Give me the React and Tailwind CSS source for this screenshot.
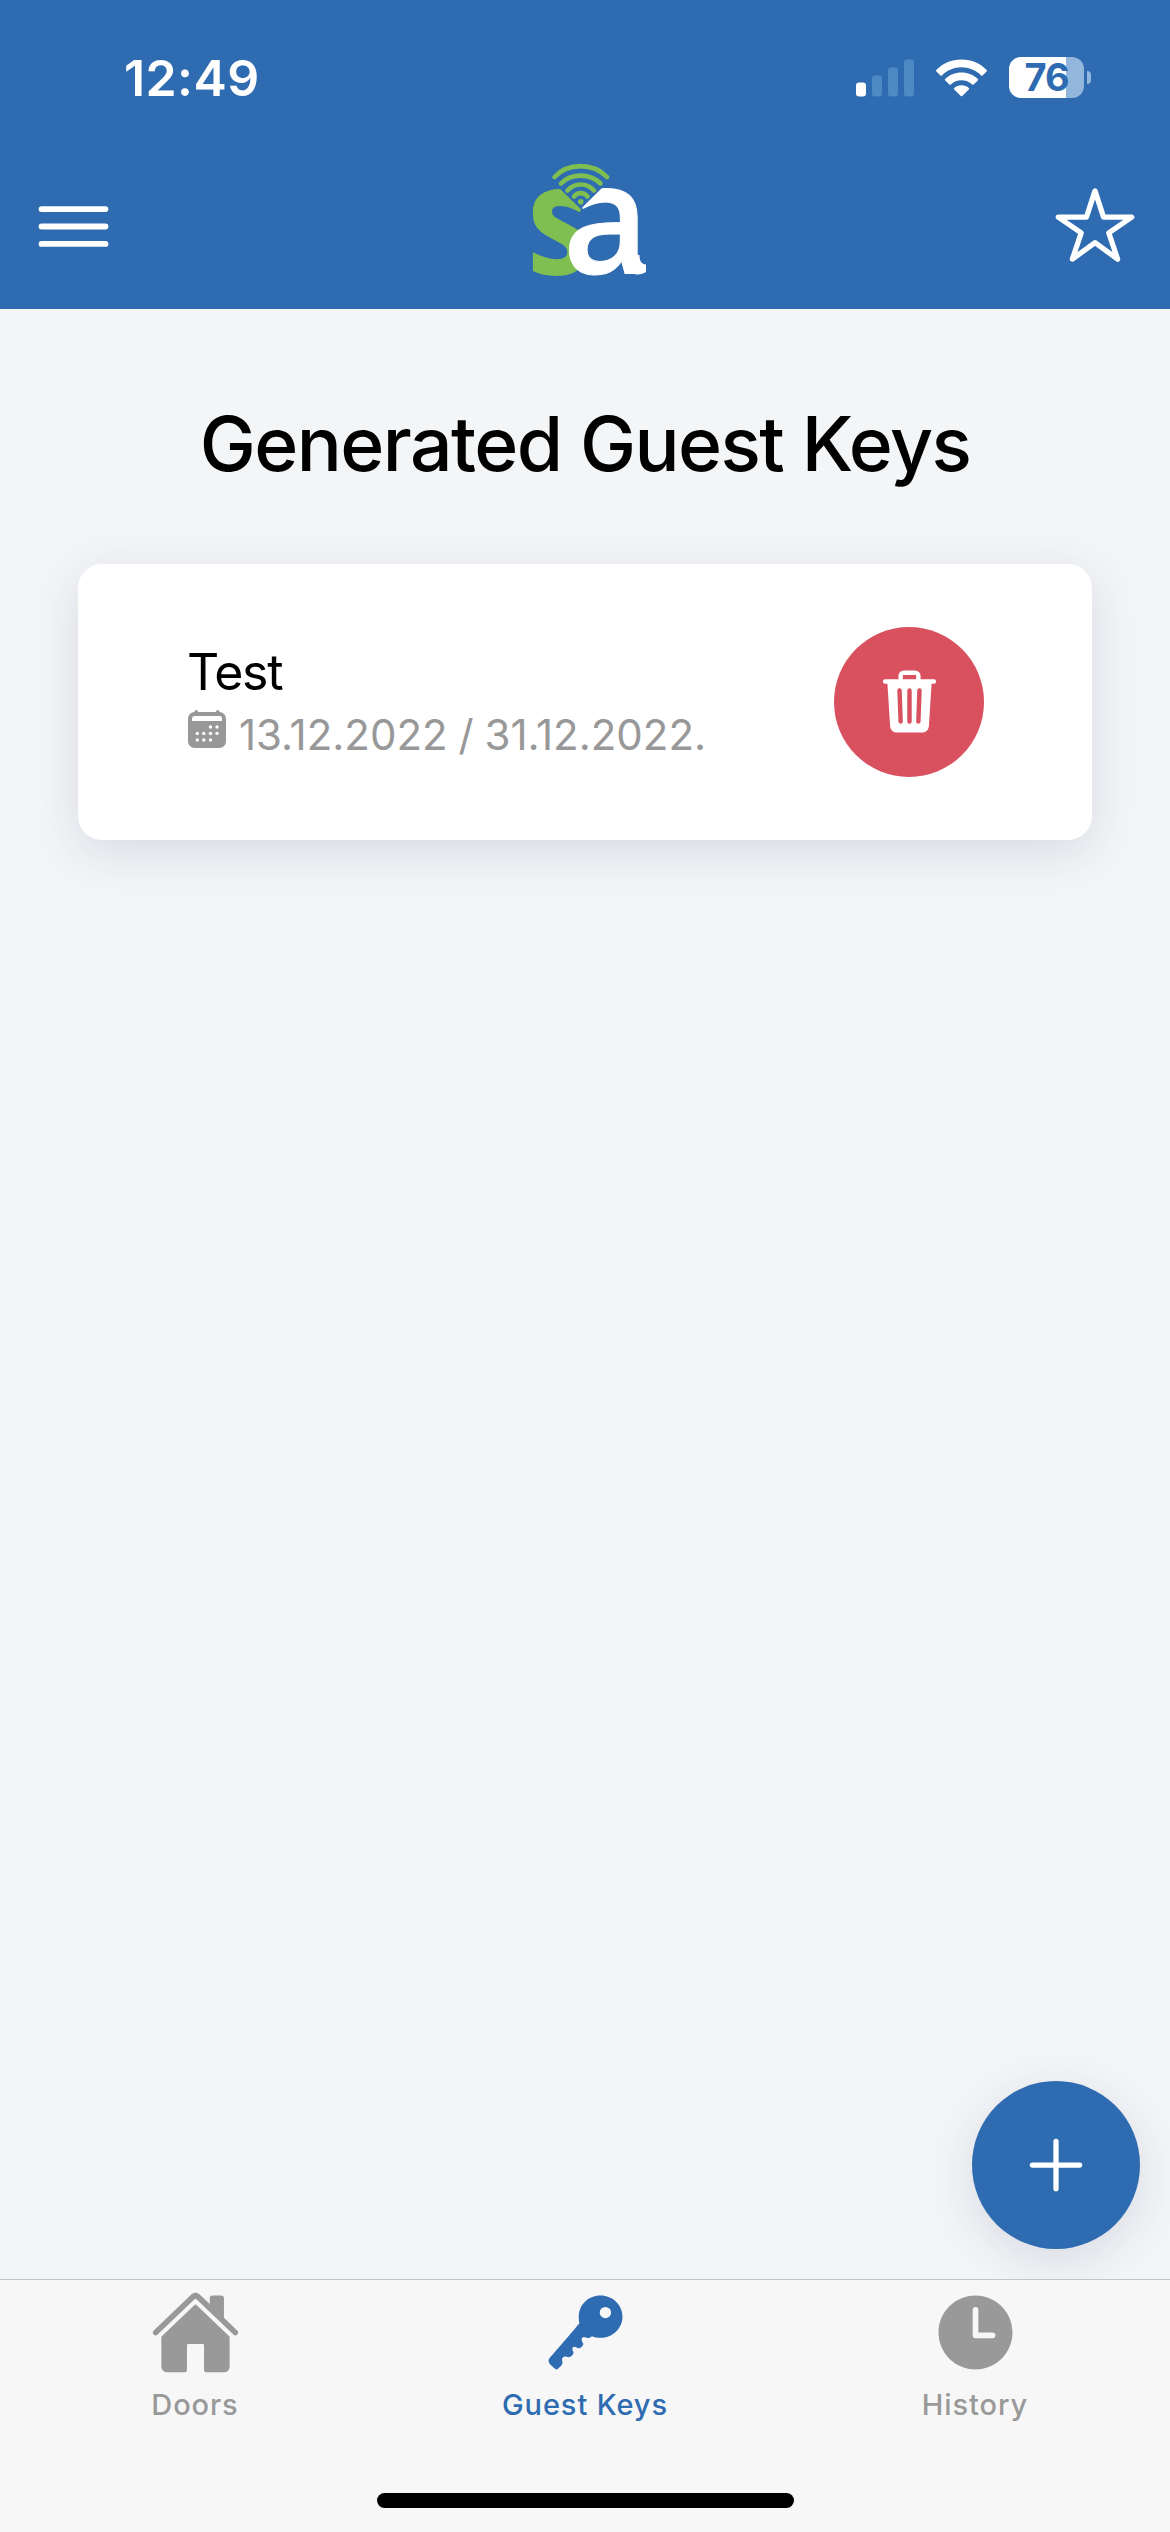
import React from "react";
import {
  IoAdd,
  IoHome,
  IoKey,
  IoMenuOutline,
  IoStarOutline,
  IoTime,
  IoTrash,
} from "react-icons/io5";

const keys = [{ id: 1, name: "Test", from: "13.12.2022", to: "31.12.2022." }];

function StatusBar() {
  return (
    <div className="flex h-[155px] items-center justify-between pl-[124px] pr-[79px] text-white">
      <div className="text-[50px] font-semibold leading-none tracking-[0.4px]">12:49</div>
      <div className="flex items-center">
        <svg className="h-[38px] w-[58px]" viewBox="0 0 58 38">
          <rect x="0" y="23.5" width="10" height="14" rx="3" fill="#fff" />
          <rect x="16" y="16.5" width="10" height="21" rx="3" fill="#4d89c2" />
          <rect x="32" y="8.5" width="10" height="29" rx="3" fill="#4d89c2" />
          <rect x="48" y="0.5" width="10" height="37" rx="3" fill="#4d89c2" />
        </svg>
        <svg className="ml-[22px] h-[38px] w-[51px]" viewBox="0 0 51 38" fill="#fff">
          <path d="M25.5 0.5C35.5 0.5 44.5 4.5 50.6 11a1 1 0 0 1 0 1.400L46.500 16.400a1 1 0 0 1-1.400 0C40 11.300 33 8.300 25.500 8.300S11 11.300 5.900 16.400a1 1 0 0 1-1.400 0L0.400 12.400a1 1 0 0 1 0-1.400C6.500 4.500 15.500 0.500 25.500 0.500Z" />
          <path d="M25.500 13.500c6.300 0 12 2.400 16.300 6.400a1 1 0 0 1 0 1.500l-4.200 4a1 1 0 0 1-1.400 0c-2.800-2.500-6.600-4.100-10.700-4.100s-7.900 1.600-10.700 4.100a1 1 0 0 1-1.400 0l-4.200-4a1 1 0 0 1 0-1.500c4.300-4 10-6.400 16.300-6.400Z" />
          <path d="M25.500 26.200c2.800 0 5.400 1 7.300 2.700a1 1 0 0 1 0 1.500l-6.600 6.600a1 1 0 0 1-1.400 0l-6.600-6.600a1 1 0 0 1 0-1.500c1.900-1.700 4.500-2.700 7.300-2.700Z" />
        </svg>
        <div className="ml-[22px] flex h-[41px] w-[75px] items-center justify-center rounded-[12px] bg-linear-to-r from-white from-76% to-[#93b7dc] to-76% text-[38px] font-bold leading-[41px] tracking-[-1px] text-[#2e6bb1]">
          76
        </div>
        <div className="ml-[3px] h-[13px] w-[4px] rounded-r-full bg-[#93b7dc]"></div>
      </div>
    </div>
  );
}

function Logo() {
  return (
    <svg className="-mt-[12px] ml-[7px] size-[120px] overflow-visible" viewBox="0 0 120 120" fill="none">
      <g className="font-['Open_Sans',sans-serif]" fontSize="154">
        <text className="font-bold" transform="translate(-3 113) scale(0.84 1)" fill="#7fbe50">s</text>
        <text className="font-semibold" transform="translate(33 113) scale(0.96 1)" fill="#fff" stroke="#fff" strokeWidth="1">a</text>
      </g>
      <path d="M100 94h9.500c0 6 2 9.500 6.500 9.500v7.500c-6 4-15 3.500-19-4Z" fill="#fff" />
      <path d="M22 20L50.700 48 79 20Z" fill="#2e6bb1" />
      <g stroke="#7fbe50" strokeWidth="4.600" strokeLinecap="round">
        <path d="M24.500 16C38 1.500 63 1.500 77 16" />
        <path d="M31 22.500c10-10.500 29-10.500 39.500 0" />
        <path d="M37.500 29.500c7-8 19.500-8 26.500 0" />
        <path d="M44 35.500c3.500-4.500 10-4.500 13.500 0" />
      </g>
      <circle cx="50.700" cy="40.700" r="2.800" fill="#7fbe50" />
    </svg>
  );
}

function Header() {
  return (
    <header className="h-[309px] bg-[#2e6bb1]">
      <StatusBar />
      <div className="flex h-[143px] items-center justify-between pl-[27px] pr-[33px] text-white">
        <IoMenuOutline className="size-[93px]" />
        <Logo />
        <IoStarOutline className="-mt-[3px] size-[84px]" />
      </div>
    </header>
  );
}

function CalendarIcon({ className }) {
  return (
    <svg className={className} viewBox="0 0 38 38" fill="#989898">
      <rect x="0" y="2" width="38" height="36" rx="6.500" />
      <rect x="6.500" y="0" width="3.500" height="6" rx="1.700" />
      <rect x="28" y="0" width="3.500" height="6" rx="1.700" />
      <path d="M4 11V8.500Q4 6 6.500 6h25Q34 6 34 8.500V11Z" fill="#fff" />
      <g fill="#fff">
        <circle cx="22.500" cy="17" r="1.700" />
        <circle cx="29" cy="17" r="1.700" />
        <circle cx="9.300" cy="23.400" r="1.700" />
        <circle cx="15.800" cy="23.400" r="1.700" />
        <circle cx="22.500" cy="23.400" r="1.700" />
        <circle cx="29" cy="23.400" r="1.700" />
        <circle cx="9.300" cy="30" r="1.700" />
        <circle cx="15.800" cy="30" r="1.700" />
        <circle cx="22.500" cy="30" r="1.700" />
      </g>
    </svg>
  );
}

function KeyCard({ item }) {
  return (
    <div className="flex h-[276px] items-center justify-between rounded-[24px] bg-white pl-[110px] pr-[108px] shadow-[0_12px_48px_rgba(40,50,90,0.13)]">
      <div className="pt-[6px]">
        <div className="-ml-[1px] text-[50px] leading-[60px] tracking-[-1.2px] text-black">{item.name}</div>
        <div className="flex items-start text-[42px] leading-[66px] text-[#989898]">
          <CalendarIcon className="mt-[8px] mr-[13px] size-[38px]" />
          <span className="[word-spacing:-1px]">
            {item.from} / {item.to}
          </span>
        </div>
      </div>
      <button className="flex size-[150px] items-center justify-center rounded-full bg-[#d9515f]">
        <IoTrash className="-mt-[2px] size-[71px] text-white" />
      </button>
    </div>
  );
}

function Tab({ icon: Icon, label, active }) {
  return (
    <div className={active ? "flex flex-1 flex-col items-center text-[#2e6bb1]" : "flex flex-1 flex-col items-center text-[#999999]"}>
      <Icon className="size-[91px]" />
      <div className="mt-[8px] text-[29px] font-medium leading-[37px] tracking-[0.9px]">{label}</div>
    </div>
  );
}

export default function App() {
  return (
    <div className="flex h-[2532px] w-[1170px] flex-col bg-[#f3f5f7] font-['Inter',sans-serif]">
      <Header />
      <main className="flex flex-1 flex-col px-[78px]">
        <h1 className="mt-[90px] text-center text-[75px] font-medium leading-[90px] tracking-[-1.55px] text-black">
          Generated Guest Keys
        </h1>
        <div className="mt-[75px]">
          {keys.map((item) => (
            <KeyCard key={item.id} item={item} />
          ))}
        </div>
        <button className="-mr-[48px] mt-auto mb-[30px] flex size-[168px] items-center justify-center self-end rounded-full bg-[#2e6bb1] text-white shadow-[0_12px_48px_rgba(40,50,90,0.13)]">
          <IoAdd className="size-[84px]" />
        </button>
      </main>
      <nav className="flex h-[253px] flex-col border-t border-[#c4c4c6] bg-[#f7f7f7]">
        <div className="flex pt-[7px]">
          <Tab icon={IoHome} label="Doors" />
          <Tab icon={IoKey} label="Guest Keys" active />
          <Tab icon={IoTime} label="History" />
        </div>
        <div className="mx-auto mt-auto mb-[24px] h-[15px] w-[417px] rounded-full bg-black"></div>
      </nav>
    </div>
  );
}
